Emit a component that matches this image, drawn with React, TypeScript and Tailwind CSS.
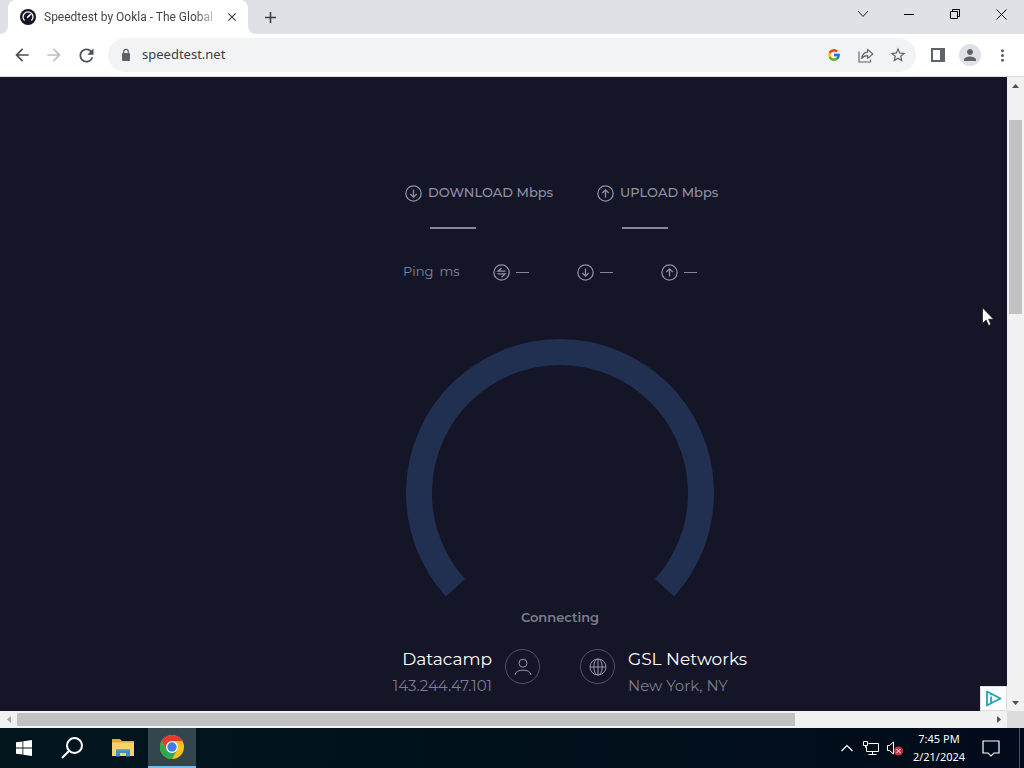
import { FcGoogle } from "react-icons/fc";
import {
  MdAdd,
  MdArrowBack,
  MdArrowForward,
  MdClose,
  MdMoreVert,
  MdPerson,
  MdRefresh,
  MdStarBorder,
} from "react-icons/md";
import type { ReactNode } from "react";

function IconButton({ label, className = "", children }: { label: string; className?: string; children: ReactNode }) {
  return (
    <button type="button" aria-label={label} className={`flex shrink-0 items-center justify-center ${className}`}>
      {children}
    </button>
  );
}

function SpeedtestIcon() {
  return (
    <svg width="16" height="16" viewBox="0 0 16 16" className="shrink-0" aria-hidden="true">
      <circle cx="8" cy="8" r="8" fill="#141526" />
      <path d="M4.6 11.6A5 5 0 1 1 11.4 11.6" fill="none" stroke="#fff" strokeWidth="1.3" />
      <path d="M7.2 8.6 10.6 5.2" stroke="#fff" strokeWidth="1.6" />
    </svg>
  );
}

function TabStrip() {
  return (
    <header className="flex h-[34px] shrink-0 bg-[#dee1e6]">
      <div className="w-2 bg-white">
        <div className="h-full w-full rounded-br-lg bg-[#dee1e6]" />
      </div>
      <div className="flex w-60 items-center rounded-t-lg bg-white pl-3 pr-2">
        <SpeedtestIcon />
        <span className="ml-2 w-[172px] whitespace-nowrap bg-linear-to-r from-[#3c4043] from-88% to-[#3c4043]/20 bg-clip-text font-['Roboto','Noto_Sans',sans-serif] text-xs text-transparent">
          Speedtest by Ookla - The Global
        </span>
        <IconButton label="Close tab" className="ml-2 size-4 text-[#3c4043]">
          <MdClose size={14} />
        </IconButton>
      </div>
      <div className="w-2 bg-white">
        <div className="h-full w-full rounded-bl-lg bg-[#dee1e6]" />
      </div>
      <IconButton label="New tab" className="w-7 text-[#3c4043]">
        <MdAdd size={19} />
      </IconButton>
      <div className="ml-auto flex h-7">
        <IconButton label="Search tabs" className="w-[46px]">
          <svg width="12" height="8" viewBox="0 0 12 8" fill="none" stroke="#222" aria-hidden="true">
            <path d="m1 1 5 5.5L11 1" />
          </svg>
        </IconButton>
        <IconButton label="Minimize" className="w-[46px]">
          <svg width="10" height="10" viewBox="0 0 10 10" stroke="#000" aria-hidden="true">
            <path d="M0 5.5h10" />
          </svg>
        </IconButton>
        <IconButton label="Restore" className="w-[46px]">
          <svg width="10" height="10" viewBox="0 0 10 10" fill="none" stroke="#000" aria-hidden="true">
            <path d="M.5 2.5h7v7h-7zM2.5 2.5v-2h7v7h-2" />
          </svg>
        </IconButton>
        <IconButton label="Close" className="w-[46px]">
          <svg width="11" height="11" viewBox="0 0 11 11" stroke="#000" aria-hidden="true">
            <path d="m.5.5 10 10M10.5.5l-10 10" />
          </svg>
        </IconButton>
      </div>
    </header>
  );
}

function Toolbar() {
  return (
    <div className="flex h-[43px] shrink-0 items-center border-b border-[#dadce0] bg-white px-1.5 text-[#5f6368]">
      <IconButton label="Back" className="size-8 text-[#4b4f54]"><MdArrowBack size={20} /></IconButton>
      <IconButton label="Forward" className="size-8 text-[#bcbec1]"><MdArrowForward size={20} /></IconButton>
      <IconButton label="Reload" className="size-8 text-[#4b4f54]"><MdRefresh size={21} /></IconButton>
      <div className="mx-1.5 flex h-[34px] min-w-0 flex-1 items-center rounded-full bg-[#f1f3f4] pl-[11px] pr-0.5">
        <svg width="14" height="14" viewBox="0 0 14 14" className="shrink-0" aria-hidden="true">
          <path d="M4 5h6a1 1 0 0 1 1 1v6a1 1 0 0 1-1 1H4a1 1 0 0 1-1-1V6a1 1 0 0 1 1-1z" fill="currentColor" />
          <path d="M4.700 5.500V3.600a2.300 2.300 0 0 1 4.600 0v1.900" fill="none" stroke="currentColor" strokeWidth="1.200" />
        </svg>
        <input
          aria-label="Address"
          defaultValue="speedtest.net"
          className="ml-[9px] min-w-0 flex-1 bg-transparent text-[13px] text-[#3c4043] outline-none"
        />
        <IconButton label="Search with Google" className="size-8"><FcGoogle size={14} /></IconButton>
        <IconButton label="Share" className="size-8">
          <svg width="16" height="15" viewBox="0 0 16 15" fill="none" stroke="currentColor" strokeWidth="1.1" aria-hidden="true">
            <path d="M1 3.500V14h11.500v-2.500" />
            <path d="M3.800 10.500C4.200 6.600 6.200 4.400 9.600 4.100V1.300L14.800 6l-5.200 4.400V7.600C7 7.600 5.200 8.400 3.800 10.500Z" strokeLinejoin="round" />
          </svg>
        </IconButton>
        <IconButton label="Bookmark this page" className="size-8"><MdStarBorder size={18} /></IconButton>
      </div>
      <IconButton label="Side panel" className="size-8">
        <svg width="14" height="14" viewBox="0 0 14 14" fill="currentColor" aria-hidden="true">
          <path d="M0 0h14v14H0zM2 2v10h7V2z" fillRule="evenodd" />
        </svg>
      </IconButton>
      <IconButton label="Profile" className="size-8">
        <span className="flex size-[22px] items-center justify-center rounded-full bg-[#dee1e6]">
          <MdPerson size={18} />
        </span>
      </IconButton>
      <IconButton label="Menu" className="size-8"><MdMoreVert size={19} /></IconButton>
    </div>
  );
}

type Metric = "down" | "up" | "idle";

function MetricIcon({ kind }: { kind: Metric }) {
  return (
    <svg width="17" height="17" viewBox="0 0 16 16" fill="none" stroke="currentColor" strokeWidth="1.2" className="shrink-0" aria-hidden="true">
      <circle cx="8" cy="8" r="7.2" />
      {kind === "down" && <path d="M8 4.2v7.3M4.900 8.400 8 11.500l3.100-3.100" />}
      {kind === "up" && <path d="M8 11.800V4.500M4.900 7.600 8 4.500l3.100 3.100" />}
      {kind === "idle" && <path d="M11.800 6.800H4.600l3.400-3.100M4.200 9.300h7.200L8 12.400" />}
    </svg>
  );
}

function SpeedResult({ kind, name }: { kind: Metric; name: string }) {
  return (
    <div className="w-48 shrink-0">
      <h2 className="flex h-5 items-center gap-1.5 whitespace-nowrap text-[13px] font-medium">
        <MetricIcon kind={kind} />
        <span>{name} Mbps</span>
      </h2>
      <div className="ml-[25px] mt-6 h-0.5 w-[46px] bg-[#85869a]" />
    </div>
  );
}

function PingValue({ kind }: { kind: Metric }) {
  return (
    <div className="flex w-[84px] shrink-0 items-center gap-1.5">
      <MetricIcon kind={kind} />
      <span className="h-px w-[13px] bg-[#85869a]" />
    </div>
  );
}

function CircleIcon({ children }: { children: ReactNode }) {
  return (
    <span className="flex size-[35px] shrink-0 items-center justify-center rounded-full border border-[#505265] text-[#9596a8]">
      <svg width="18" height="18" viewBox="0 0 18 18" fill="none" stroke="currentColor" aria-hidden="true">
        {children}
      </svg>
    </span>
  );
}

function SpeedtestPage() {
  return (
    <main className="relative min-w-0 flex-1 overflow-hidden bg-[#141526] font-['Montserrat','Inter',sans-serif] text-[#9091a5]">
      <div className="flex w-[1120px] flex-col items-center pt-[106px]">
        <div className="w-[314px]">
          <div className="flex pl-0.5">
            <SpeedResult kind="down" name="DOWNLOAD" />
            <SpeedResult kind="up" name="UPLOAD" />
          </div>
          <div className="mt-[33px] flex h-5 items-center">
            <span className="flex w-[90px] shrink-0 gap-1.5 text-[13px] text-[#858699]">
              <span>Ping</span>
              <span>ms</span>
            </span>
            <PingValue kind="idle" />
            <PingValue kind="down" />
            <PingValue kind="up" />
          </div>
        </div>
        <svg width="308" height="258" viewBox="0 0 308 258" className="mt-[57px]" role="img" aria-label="Speed gauge">
          <path d="M49.500 248.700A141 141 0 1 1 258.500 248.700" fill="none" stroke="#212f50" strokeWidth="26" />
        </svg>
        <p className="mt-2.5 text-[13px] font-semibold leading-5 text-[#7c7d8f]">Connecting</p>
        <div className="mt-5 grid w-full grid-cols-2 gap-10">
          <div className="flex items-start justify-end gap-[13px]">
            <div className="text-right">
              <div className="text-[17px] leading-6 text-white">Datacamp</div>
              <div className="mt-[3px] text-[15px] leading-6 text-[#7c7d8f]">143.244.47.101</div>
            </div>
            <div className="pt-0.5">
              <CircleIcon>
                <circle cx="9" cy="5.200" r="4" />
                <path d="M1 17c0-6.500 16-6.500 16 0" />
              </CircleIcon>
            </div>
          </div>
          <div className="flex items-start gap-[13px]">
            <div className="pt-0.5">
              <CircleIcon>
                <circle cx="9" cy="9" r="8" />
                <ellipse cx="9" cy="9" rx="4.200" ry="8" />
                <path d="M1 9h16M9 1v16" />
              </CircleIcon>
            </div>
            <div>
              <div className="text-[17px] leading-6 text-white">GSL Networks</div>
              <div className="mt-[3px] text-[15px] leading-6 text-[#7c7d8f]">New York, NY</div>
            </div>
          </div>
        </div>
      </div>
      <a href="#ad-choices" aria-label="Ad choices" className="absolute bottom-0 right-0 flex h-[25px] w-[27px] items-center justify-center border border-[#ddd] bg-white">
        <svg width="17" height="17" viewBox="0 0 17 17" fill="none" stroke="#21a3b5" strokeWidth="1.800" strokeLinejoin="round" aria-hidden="true">
          <path d="M6 13.200 2 15.500v-14L15.500 8.500 6 13.200V6.500" />
          <path d="M6 3.800v1.500" />
        </svg>
      </a>
      <svg width="12" height="19" viewBox="0 0 12 19" className="absolute right-[13px] top-[230px]" aria-hidden="true">
        <path d="M.5.8v15.700l3.600-3.500 2.500 5.500 2.400-1-2.400-5.300h5z" fill="#fff" stroke="#111" strokeWidth=".7" />
      </svg>
    </main>
  );
}

function VerticalScrollbar() {
  return (
    <div className="flex w-[17px] shrink-0 flex-col items-center bg-[#f1f1f1]">
      <IconButton label="Scroll up" className="h-[17px] w-full">
        <svg width="7" height="4" viewBox="0 0 7 4" fill="#505050" aria-hidden="true"><path d="M0 4 3.500 0 7 4z" /></svg>
      </IconButton>
      <div className="h-[26px]" />
      <div className="h-[194px] w-[13px] bg-[#c1c1c1]" />
      <IconButton label="Scroll down" className="mt-auto h-[17px] w-full">
        <svg width="7" height="4" viewBox="0 0 7 4" fill="#505050" aria-hidden="true"><path d="M0 0h7L3.500 4z" /></svg>
      </IconButton>
    </div>
  );
}

function HorizontalScrollbar() {
  return (
    <div className="flex h-[17px] shrink-0 items-center bg-[#f1f1f1]">
      <IconButton label="Scroll left" className="h-full w-[17px]">
        <svg width="4" height="7" viewBox="0 0 4 7" fill="#a3a3a3" aria-hidden="true"><path d="M4 0v7L0 3.500z" /></svg>
      </IconButton>
      <div className="h-[13px] flex-1">
        <div className="h-full w-4/5 bg-[#c1c1c1]" />
      </div>
      <IconButton label="Scroll right" className="h-full w-[17px]">
        <svg width="4" height="7" viewBox="0 0 4 7" fill="#505050" aria-hidden="true"><path d="M0 0v7l4-3.500z" /></svg>
      </IconButton>
      <div className="h-full w-[17px] bg-[#dcdcdc]" />
    </div>
  );
}

function Taskbar() {
  return (
    <footer className="flex h-10 shrink-0 bg-linear-to-r from-[#02151d] via-[#01111c] to-[#020b1b] text-white">
      <IconButton label="Start" className="w-12">
        <svg width="16" height="16" viewBox="0 0 16 16" fill="#fff" aria-hidden="true">
          <path d="M0 2.300 6.500 1.400v6.200H0zM7.300 1.300 16 0v7.600H7.300zM0 8.400h6.500v6.200L0 13.700zM7.300 8.400H16V16l-8.700-1.300z" />
        </svg>
      </IconButton>
      <IconButton label="Search" className="w-12">
        <svg width="22" height="22" viewBox="0 0 22 22" fill="none" stroke="#fff" strokeWidth="2" aria-hidden="true">
          <circle cx="13.500" cy="8.500" r="7.500" />
          <path d="M8.200 13.800 1 21" />
        </svg>
      </IconButton>
      <IconButton label="File Explorer" className="ml-[3px] w-12">
        <svg width="22" height="20" viewBox="0 0 22 20" aria-hidden="true">
          <path d="M0 1h8l2 2h12v15H0z" fill="#e8a92d" />
          <path d="M0 4.500h22V18H0z" fill="#f7d26c" />
          <path d="M4 18.500V11h14v7.500h-4V15H8v3.500z" fill="#3f8fc4" />
          <path d="M4 11h14v1.500H4z" fill="#5fa8d6" />
        </svg>
      </IconButton>
      <IconButton label="Google Chrome" className="ml-px w-12 border-b-2 border-[#76b9ed] bg-[#33464d]">
        <svg width="24" height="24" viewBox="0 0 24 24" aria-hidden="true">
          <circle cx="12" cy="12" r="12" fill="#fbc116" />
          <path d="M1.600 6A12 12 0 0 1 22.400 6H12L6.800 15z" fill="#e33b2e" />
          <path d="M1.600 6A12 12 0 0 0 12 24L17.200 15H6.800z" fill="#2da94f" />
          <circle cx="12" cy="12" r="6" fill="#fff" />
          <circle cx="12" cy="12" r="4.700" fill="#3f7ee8" />
        </svg>
      </IconButton>
      <div className="ml-auto flex">
        <IconButton label="Show hidden icons" className="w-6">
          <svg width="12" height="8" viewBox="0 0 12 8" fill="none" stroke="#fff" strokeWidth="1.200" aria-hidden="true"><path d="m.5 7 5.500-5.500L11.500 7" /></svg>
        </IconButton>
        <IconButton label="Network" className="w-6">
          <svg width="16" height="14" viewBox="0 0 16 14" fill="none" stroke="#fff" aria-hidden="true">
            <path d="M5.500 2.500h10v8h-12v-5M9.500 10.500v3M5.500 13.500h8M.5.500h4v4h-4zM2.500 4.500v2h1" />
          </svg>
        </IconButton>
        <IconButton label="Volume muted" className="w-6">
          <svg width="18" height="16" viewBox="0 0 18 16" fill="none" aria-hidden="true">
            <path d="M1.500 5.500h2l4-3.500v12l-4-3.500h-2z" stroke="#fff" />
            <circle cx="12.500" cy="11" r="4.500" fill="#d1323b" />
            <path d="m10.500 9 4 4M14.500 9l-4 4" stroke="#fff" />
          </svg>
        </IconButton>
        <button type="button" className="w-16 text-center text-[11px] leading-[18px]">
          <time dateTime="2024-02-21T19:45">
            <span className="block">7:45 PM</span>
            <span className="block">2/21/2024</span>
          </time>
        </button>
        <IconButton label="Notifications" className="w-10">
          <svg width="18" height="17" viewBox="0 0 18 17" fill="none" stroke="#fff" strokeWidth="1.200" aria-hidden="true">
            <path d="M1 1h16v12h-5l-3 3-3-3H1z" />
          </svg>
        </IconButton>
        <button type="button" aria-label="Show desktop" className="ml-2 w-[5px] border-l border-[#48545f]" />
      </div>
    </footer>
  );
}

export default function App() {
  return (
    <div className="flex h-screen flex-col overflow-hidden font-['Segoe_UI','Noto_Sans',sans-serif]">
      <TabStrip />
      <Toolbar />
      <div className="flex min-h-0 flex-1">
        <SpeedtestPage />
        <VerticalScrollbar />
      </div>
      <HorizontalScrollbar />
      <Taskbar />
    </div>
  );
}
